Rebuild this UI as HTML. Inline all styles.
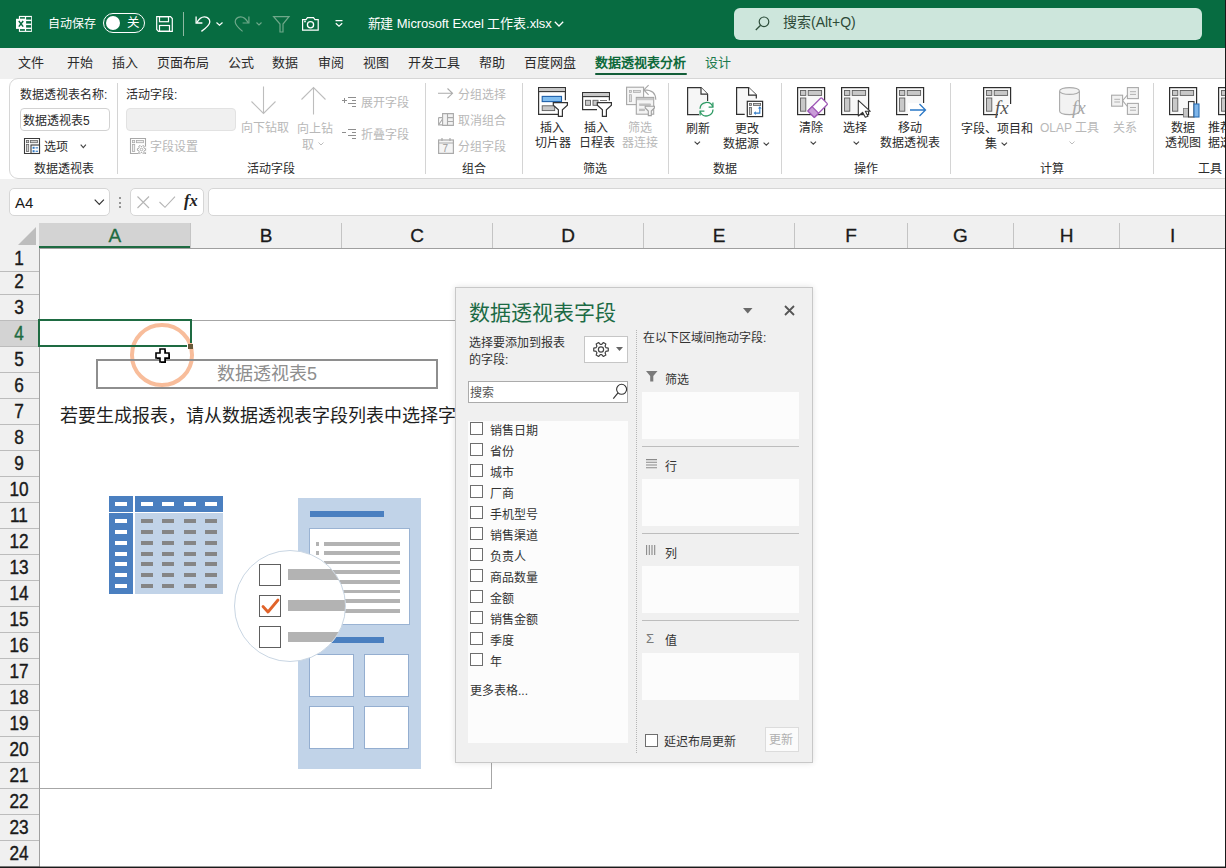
<!DOCTYPE html>
<html lang="zh-CN"><head><meta charset="utf-8"><style>
html,body{margin:0;padding:0;}
body{width:1226px;height:868px;position:relative;overflow:hidden;background:#fff;font-family:"Liberation Sans",sans-serif;}
.t{position:absolute;white-space:nowrap;}
svg{overflow:visible;position:absolute}
</style></head><body>
<div style="position:absolute;left:0px;top:0px;width:1226px;height:48px;background:#076c41;"></div>
<svg style="position:absolute;left:16px;top:16px;" width="16" height="16" viewBox="0 0 16 16"><rect x="2.9" y="-0.1" width="13" height="16" fill="#ffffff"/>
<g fill="#076c41"><rect x="10.1" y="1.1" width="5" height="2.5"/><rect x="10.1" y="5.1" width="5" height="2.5"/><rect x="10.1" y="9.1" width="5" height="2.5"/><rect x="10.1" y="13.1" width="5" height="1.7"/>
<rect x="4" y="1.1" width="4.9" height="1.7"/><rect x="4" y="13.1" width="4.9" height="1.7"/></g>
<rect x="0" y="2.8" width="9.5" height="10.1" fill="#ffffff"/>
<path d="M2.8 5 L7.2 10.6 M7.2 5 L2.8 10.6" stroke="#076c41" stroke-width="1.5"/></svg>
<div class="t" style="left:48px;top:17.8px;font-size:12px;line-height:12px;color:#ffffff;">自动保存</div>
<div style="position:absolute;left:103px;top:13px;width:42px;height:20px;border:1.3px solid #ffffff;border-radius:10px;box-sizing:border-box;"></div>
<div style="position:absolute;left:105.5px;top:15.7px;width:14.6px;height:14.6px;background:#ffffff;border-radius:50%;"></div>
<div class="t" style="left:127px;top:17px;font-size:12.5px;line-height:12.5px;color:#ffffff;">关</div>
<svg style="position:absolute;left:156px;top:16px;" width="17" height="16" viewBox="0 0 17 16"><path d="M0.7 0.7 H14.5 L16.3 2.5 V15.3 H2.5 L0.7 13.5 Z" fill="none" stroke="#ffffff" stroke-width="1.2"/>
<rect x="3.5" y="0.7" width="9" height="5" fill="none" stroke="#ffffff" stroke-width="1.2"/>
<rect x="3.5" y="9.5" width="10" height="5.8" fill="none" stroke="#ffffff" stroke-width="1.2"/></svg>
<div style="position:absolute;left:183px;top:12px;width:1px;height:24px;background:#8fb9a2;"></div>
<svg style="position:absolute;left:195px;top:16px;" width="16" height="16" viewBox="0 0 16 16"><path d="M1.8 6.8 Q5 0.8 9.5 0.9 Q14.8 1.5 14.8 6 Q14.6 9.5 6.4 15.4" fill="none" stroke="#ffffff" stroke-width="1.3"/>
<path d="M1.1 0.6 V7 H7.4" fill="none" stroke="#ffffff" stroke-width="1.3"/></svg>
<svg style="position:absolute;left:216px;top:22px;" width="7" height="4" viewBox="0 0 7 4"><path d="M0.5 0.5 L3.5 3.2 L6.5 0.5" fill="none" stroke="#ffffff" stroke-width="1.2"/></svg>
<svg style="position:absolute;left:235px;top:16px;" width="15" height="16" viewBox="0 0 15 16"><path d="M13.2 6.8 Q10 0.8 5.5 0.9 Q0.2 1.5 0.2 6 Q0.4 9.5 7.6 15.4" fill="none" stroke="#6fa88a" stroke-width="1.2"/>
<path d="M13.9 0.6 V7 H7.6" fill="none" stroke="#6fa88a" stroke-width="1.2"/></svg>
<svg style="position:absolute;left:256px;top:22px;" width="6" height="4" viewBox="0 0 6 4"><path d="M0.5 0.5 L3 3 L5.5 0.5" fill="none" stroke="#6fa88a" stroke-width="1.1"/></svg>
<svg style="position:absolute;left:273px;top:16px;" width="17" height="17" viewBox="0 0 17 17"><path d="M0.6 0.6 H16 L10 8 V16 H7 V8 Z" fill="none" stroke="#6fa88a" stroke-width="1.2"/></svg>
<svg style="position:absolute;left:302px;top:17px;" width="17" height="14" viewBox="0 0 17 14"><path d="M0.6 2.6 H4 L5.5 0.6 H11.5 L13 2.6 H16.2 V13.2 H0.6 Z" fill="none" stroke="#ffffff" stroke-width="1.2"/>
<circle cx="8.5" cy="7.8" r="3.1" fill="none" stroke="#ffffff" stroke-width="1.3"/><rect x="2.2" y="3.7" width="1.6" height="1.6" fill="#ffffff"/></svg>
<svg style="position:absolute;left:335px;top:20px;" width="8" height="8" viewBox="0 0 8 8"><path d="M0.5 0.7 H7.5 M0.8 3.3 L4 6.3 L7.2 3.3" fill="none" stroke="#ffffff" stroke-width="1.2"/></svg>
<div class="t" style="left:367.5px;top:17.0px;font-size:13px;line-height:13px;color:#ffffff;letter-spacing:-0.08px;">新建 Microsoft Excel 工作表.xlsx</div>
<svg style="position:absolute;left:554px;top:21px;" width="10" height="6" viewBox="0 0 10 6"><path d="M0.8 0.8 L5 5 L9.2 0.8" fill="none" stroke="#ffffff" stroke-width="1.3"/></svg>
<div style="position:absolute;left:734px;top:8px;width:468px;height:32px;background:#cde6dc;border-radius:6px;"></div>
<svg style="position:absolute;left:755px;top:16px;" width="15" height="15" viewBox="0 0 15 15"><circle cx="9" cy="5.8" r="4.8" fill="none" stroke="#2f4f3c" stroke-width="1.2"/><path d="M5.6 9.2 L0.8 14" stroke="#2f4f3c" stroke-width="1.3"/></svg>
<div class="t" style="left:783px;top:15px;font-size:14px;line-height:14px;color:#2d4a38;">搜索(Alt+Q)</div>
<div style="position:absolute;left:0px;top:48px;width:1226px;height:31px;background:#f0f0f0;"></div>
<div class="t" style="left:18px;top:55.5px;font-size:13px;line-height:13px;color:#2b2b2b;">文件</div>
<div class="t" style="left:67px;top:55.5px;font-size:13px;line-height:13px;color:#2b2b2b;">开始</div>
<div class="t" style="left:112px;top:55.5px;font-size:13px;line-height:13px;color:#2b2b2b;">插入</div>
<div class="t" style="left:157px;top:55.5px;font-size:13px;line-height:13px;color:#2b2b2b;">页面布局</div>
<div class="t" style="left:228px;top:55.5px;font-size:13px;line-height:13px;color:#2b2b2b;">公式</div>
<div class="t" style="left:272px;top:55.5px;font-size:13px;line-height:13px;color:#2b2b2b;">数据</div>
<div class="t" style="left:318px;top:55.5px;font-size:13px;line-height:13px;color:#2b2b2b;">审阅</div>
<div class="t" style="left:363px;top:55.5px;font-size:13px;line-height:13px;color:#2b2b2b;">视图</div>
<div class="t" style="left:408px;top:55.5px;font-size:13px;line-height:13px;color:#2b2b2b;">开发工具</div>
<div class="t" style="left:479px;top:55.5px;font-size:13px;line-height:13px;color:#2b2b2b;">帮助</div>
<div class="t" style="left:524px;top:55.5px;font-size:13px;line-height:13px;color:#2b2b2b;">百度网盘</div>
<div class="t" style="left:595px;top:55.5px;font-size:13px;line-height:13px;color:#0e6a3b;font-weight:bold;">数据透视表分析</div>
<div class="t" style="left:705px;top:55.5px;font-size:13px;line-height:13px;color:#1c7a4d;">设计</div>
<div style="position:absolute;left:595px;top:72.7px;width:92px;height:2.4px;background:#135e38;border-radius:1px;"></div>
<div style="position:absolute;left:9px;top:78px;width:1240px;height:101px;background:#fff;border:1px solid #d6d6d6;border-radius:9px;box-sizing:border-box;"></div>
<div style="position:absolute;left:117px;top:83px;width:1px;height:91px;background:#d4d4d4;"></div>
<div style="position:absolute;left:425px;top:83px;width:1px;height:91px;background:#d4d4d4;"></div>
<div style="position:absolute;left:522px;top:83px;width:1px;height:91px;background:#d4d4d4;"></div>
<div style="position:absolute;left:668px;top:83px;width:1px;height:91px;background:#d4d4d4;"></div>
<div style="position:absolute;left:781px;top:83px;width:1px;height:91px;background:#d4d4d4;"></div>
<div style="position:absolute;left:950px;top:83px;width:1px;height:91px;background:#d4d4d4;"></div>
<div style="position:absolute;left:1153px;top:83px;width:1px;height:91px;background:#d4d4d4;"></div>
<div class="t" style="left:-36.0px;top:162.5px;width:200px;text-align:center;font-size:12px;line-height:12px;color:#2b2b2b;">数据透视表</div>
<div class="t" style="left:171.0px;top:162.5px;width:200px;text-align:center;font-size:12px;line-height:12px;color:#2b2b2b;">活动字段</div>
<div class="t" style="left:374.0px;top:162.5px;width:200px;text-align:center;font-size:12px;line-height:12px;color:#2b2b2b;">组合</div>
<div class="t" style="left:495.0px;top:162.5px;width:200px;text-align:center;font-size:12px;line-height:12px;color:#2b2b2b;">筛选</div>
<div class="t" style="left:625.0px;top:162.5px;width:200px;text-align:center;font-size:12px;line-height:12px;color:#2b2b2b;">数据</div>
<div class="t" style="left:766.0px;top:162.5px;width:200px;text-align:center;font-size:12px;line-height:12px;color:#2b2b2b;">操作</div>
<div class="t" style="left:952.0px;top:162.5px;width:200px;text-align:center;font-size:12px;line-height:12px;color:#2b2b2b;">计算</div>
<div class="t" style="left:1110.0px;top:162.5px;width:200px;text-align:center;font-size:12px;line-height:12px;color:#2b2b2b;">工具</div>
<div class="t" style="left:20px;top:88.5px;font-size:12px;line-height:12px;color:#2b2b2b;">数据透视表名称:</div>
<div style="position:absolute;left:20px;top:108px;width:90px;height:23px;background:#fff;border:1px solid #d2d2d2;border-radius:4px;box-sizing:border-box;"></div>
<div class="t" style="left:23px;top:114.5px;font-size:12px;line-height:12px;color:#2b2b2b;">数据透视表5</div>
<svg style="position:absolute;left:24px;top:138px;" width="17" height="17" viewBox="0 0 17 17"><path d="M0.5 0.5 H15.5 V15.5 H0.5 Z" fill="#fff" stroke="#3a3a3a" stroke-width="1.1"/>
<rect x="2.5" y="2.5" width="2.2" height="2.2" fill="#d0d0d0" stroke="#666" stroke-width="0.8"/><rect x="6.5" y="2.5" width="7" height="2.2" fill="#d0d0d0" stroke="#666" stroke-width="0.8"/>
<rect x="2.5" y="6.5" width="2.2" height="7" fill="#d0d0d0" stroke="#666" stroke-width="0.8"/>
<rect x="7" y="7" width="8.5" height="8.5" fill="#fff" stroke="#3a3a3a" stroke-width="1.1"/>
<rect x="8.6" y="8.8" width="2" height="2" fill="#2f78c4"/><rect x="11.6" y="9.3" width="2.4" height="1.1" fill="#2f78c4"/><rect x="8.6" y="12.2" width="2" height="2" fill="#2f78c4"/><rect x="11.6" y="12.7" width="2.4" height="1.1" fill="#2f78c4"/></svg>
<div class="t" style="left:44px;top:140.5px;font-size:12px;line-height:12px;color:#2b2b2b;">选项</div>
<svg style="position:absolute;left:80px;top:144px;" width="7" height="5" viewBox="0 0 7 5"><path d="M0.7 0.7 L3.3 3.6 L5.9 0.7" fill="none" stroke="#444" stroke-width="1.1"/></svg>
<div class="t" style="left:126px;top:88.5px;font-size:12px;line-height:12px;color:#2b2b2b;">活动字段:</div>
<div style="position:absolute;left:126px;top:108px;width:110px;height:23px;background:#f0f0f0;border:1px solid #e2e2e2;border-radius:4px;box-sizing:border-box;"></div>
<svg style="position:absolute;left:130px;top:138px;" width="17" height="17" viewBox="0 0 17 17"><path d="M0.5 0.5 H15.5 V15.5 H0.5 Z" fill="#fff" stroke="#a8a8a8" stroke-width="1.1"/>
<rect x="2.5" y="2.5" width="2.2" height="2.2" fill="#eee" stroke="#aaa" stroke-width="0.8"/><rect x="6.5" y="2.5" width="7" height="2.2" fill="#eee" stroke="#aaa" stroke-width="0.8"/>
<rect x="2.5" y="6.5" width="2.2" height="7" fill="#eee" stroke="#aaa" stroke-width="0.8"/>
<circle cx="11.5" cy="11.5" r="5" fill="#fff"/><path d="M14.28 10.38 L15.62 10.70 L15.62 12.30 L14.28 12.62 L13.86 13.35 L14.26 14.67 L12.87 15.47 L11.92 14.47 L11.08 14.47 L10.13 15.47 L8.74 14.67 L9.14 13.35 L8.72 12.62 L7.38 12.30 L7.38 10.70 L8.72 10.38 L9.14 9.65 L8.74 8.33 L10.13 7.53 L11.08 8.53 L11.92 8.53 L12.87 7.53 L14.26 8.33 L13.86 9.65 Z" fill="#fff" stroke="#a8a8a8" stroke-width="1"/><circle cx="11.5" cy="11.5" r="1.3" fill="none" stroke="#a8a8a8" stroke-width="0.9"/></svg>
<div class="t" style="left:150px;top:140.5px;font-size:12px;line-height:12px;color:#b8b8b8;">字段设置</div>
<svg style="position:absolute;left:250px;top:86px;" width="27" height="29" viewBox="0 0 27 29"><path d="M13.5 0.5 V27.5 M1.5 15.5 L13.5 27.5 L25.5 15.5" fill="none" stroke="#bdbdbd" stroke-width="1.1"/></svg>
<div class="t" style="left:241px;top:121.5px;font-size:12px;line-height:12px;color:#b8b8b8;">向下钻取</div>
<svg style="position:absolute;left:300px;top:86px;" width="27" height="29" viewBox="0 0 27 29"><path d="M13.5 1 V28.5 M1.5 13.5 L13.5 1.5 L25.5 13.5" fill="none" stroke="#bdbdbd" stroke-width="1.1"/></svg>
<div class="t" style="left:297px;top:122.5px;font-size:12px;line-height:12px;color:#b8b8b8;">向上钻</div>
<div class="t" style="left:302px;top:138.5px;font-size:12px;line-height:12px;color:#b8b8b8;">取</div>
<svg style="position:absolute;left:318px;top:142px;" width="6" height="4" viewBox="0 0 6 4"><path d="M0.5 0.5 L3 3 L5.5 0.5" fill="none" stroke="#bdbdbd" stroke-width="1"/></svg>
<svg style="position:absolute;left:342px;top:96px;" width="15" height="12" viewBox="0 0 15 12"><path d="M0 4.5 H5 M2.5 2 V7 M6 1.5 H14 M10 4.5 H14 M6 7.5 H14 M10 10.5 H14" fill="none" stroke="#8e8e8e" stroke-width="1"/></svg>
<div class="t" style="left:361px;top:96.5px;font-size:12px;line-height:12px;color:#b8b8b8;">展开字段</div>
<svg style="position:absolute;left:342px;top:128px;" width="15" height="12" viewBox="0 0 15 12"><path d="M0 4.5 H4 M6 1.5 H14 M10 4.5 H14 M6 7.5 H14 M10 10.5 H14" fill="none" stroke="#8e8e8e" stroke-width="1"/></svg>
<div class="t" style="left:361px;top:128.5px;font-size:12px;line-height:12px;color:#b8b8b8;">折叠字段</div>
<svg style="position:absolute;left:438px;top:88px;" width="16" height="11" viewBox="0 0 16 11"><path d="M0 5.3 H14.5 M9.5 0.5 L14.5 5.3 L9.5 10.2" fill="none" stroke="#aaa" stroke-width="1.1"/></svg>
<div class="t" style="left:458px;top:88.5px;font-size:12px;line-height:12px;color:#b8b8b8;">分组选择</div>
<svg style="position:absolute;left:438px;top:113px;" width="16" height="13" viewBox="0 0 16 13"><path d="M0.6 4.6 H4.6 M0.6 4.6 V11.9 H4.6 M1.2 11 L4.3 6.4" fill="none" stroke="#aaa" stroke-width="1.1"/><path d="M4.6 0.6 H15.4 V12.4 H4.6 Z M9.5 0.6 V12.4 M9.5 4.6 H15.4 M9.5 8.5 H15.4" fill="#f2f2f2" stroke="#aaa" stroke-width="1.1"/></svg>
<div class="t" style="left:458px;top:114.5px;font-size:12px;line-height:12px;color:#b8b8b8;">取消组合</div>
<svg style="position:absolute;left:438px;top:138px;" width="16" height="16" viewBox="0 0 16 16"><rect x="0.6" y="2" width="14.8" height="13.4" fill="#f4f4f4" stroke="#aaa" stroke-width="1.2"/><path d="M0.6 5 H15.4 M4 0 V3 M12 0 V3" stroke="#aaa" stroke-width="1.2"/><text x="4.6" y="13.8" font-size="10" fill="#9a9a9a" font-family="Liberation Sans">7</text></svg>
<div class="t" style="left:458px;top:140.5px;font-size:12px;line-height:12px;color:#b8b8b8;">分组字段</div>
<svg style="position:absolute;left:538px;top:87px;" width="31" height="31" viewBox="0 0 31 31"><path d="M20.5 27.4 H0.6 V0.6 H27.4 V13.3" fill="#fff" stroke="#333" stroke-width="1.2"/>
<rect x="1.2" y="1.2" width="25.6" height="3.2" fill="#c8c8c8"/><path d="M0.6 4.6 H27.4" stroke="#333" stroke-width="1.1"/>
<rect x="4.2" y="9.4" width="19.3" height="5.2" fill="#80bdf0" stroke="#1d5fa8" stroke-width="1.1"/>
<rect x="4.2" y="18.8" width="12.5" height="4.8" fill="#c8c8c8" stroke="#5e5e5e" stroke-width="0.9"/>
<path d="M15.3 15.6 H29.4 V18.3 L24.4 22.7 V29.4 H20.4 V22.7 L15.3 18.3 Z" fill="#fff" stroke="#333" stroke-width="1.2"/></svg>
<div class="t" style="left:540px;top:121.5px;font-size:12px;line-height:12px;color:#2b2b2b;">插入</div>
<div class="t" style="left:535px;top:136.5px;font-size:12px;line-height:12px;color:#2b2b2b;">切片器</div>
<svg style="position:absolute;left:582px;top:92px;" width="31" height="26" viewBox="0 0 31 26"><path d="M15 17.6 H0.6 V0.6 H27.4 V8.5" fill="#fff" stroke="#333" stroke-width="1.2"/>
<rect x="1.2" y="1.2" width="25.6" height="3.2" fill="#c8c8c8"/><path d="M0.6 4.6 H27.4" stroke="#333" stroke-width="1.1"/>
<rect x="3.5" y="8.3" width="5" height="5" fill="#c8c8c8" stroke="#5e5e5e" stroke-width="0.9"/><rect x="11" y="8.3" width="5" height="5" fill="#c8c8c8" stroke="#5e5e5e" stroke-width="0.9"/><path d="M18 8.5 H25" stroke="#666" stroke-width="0.9"/>
<path d="M15.3 10.6 H29.4 V13.3 L24.4 17.7 V24.4 H20.4 V17.7 L15.3 13.3 Z" fill="#fff" stroke="#333" stroke-width="1.2"/></svg>
<div class="t" style="left:584px;top:121.5px;font-size:12px;line-height:12px;color:#2b2b2b;">插入</div>
<div class="t" style="left:579px;top:136.5px;font-size:12px;line-height:12px;color:#2b2b2b;">日程表</div>
<svg style="position:absolute;left:626px;top:85px;" width="31" height="32" viewBox="0 0 31 32"><rect x="0.6" y="2.2" width="17" height="17.4" fill="#f6f6f6" stroke="#a6a6a6" stroke-width="1.1"/>
<rect x="3.4" y="5.6" width="2.2" height="2" fill="#ddd" stroke="#aaa" stroke-width="0.7"/><rect x="7.5" y="5.6" width="7" height="2" fill="#ddd" stroke="#aaa" stroke-width="0.7"/><rect x="3.4" y="9.7" width="2.2" height="7" fill="#ddd" stroke="#aaa" stroke-width="0.7"/>
<path d="M22.6 0.1 L17.8 4.9 L22.6 9.9 M18.2 4.9 Q29.8 4.9 29.8 14.8" fill="none" stroke="#a6a6a6" stroke-width="1.1"/>
<rect x="10.3" y="12.4" width="17.4" height="16.8" fill="#f4f4f4" stroke="#a6a6a6" stroke-width="1.1"/>
<rect x="10.9" y="13" width="16.2" height="2.2" fill="#c8c8c8"/>
<rect x="13.7" y="18.9" width="11" height="1.8" fill="#c4c4c4" stroke="#b0b0b0" stroke-width="0.5"/><rect x="13.7" y="24" width="5" height="1.8" fill="#c4c4c4" stroke="#b0b0b0" stroke-width="0.5"/>
<path d="M19.2 21.3 H28.4 V23 L25.3 26 V30.6 H22.3 V26 L19.2 23 Z" fill="#f4f4f4" stroke="#a0a0a0" stroke-width="1.1"/></svg>
<div class="t" style="left:628px;top:121.5px;font-size:12px;line-height:12px;color:#b8b8b8;">筛选</div>
<div class="t" style="left:622px;top:136.5px;font-size:12px;line-height:12px;color:#b8b8b8;">器连接</div>
<svg style="position:absolute;left:687px;top:87px;" width="28" height="31" viewBox="0 0 28 31"><path d="M12 27.6 H0.6 V0.6 H14 L20.6 7.2 V14" fill="#f6f6f6" stroke="#333" stroke-width="1.2"/><path d="M14 0.6 V7.2 H20.6" fill="#fff" stroke="#333" stroke-width="1.2"/>
<path d="M13 21.8 A 6.6 6.6 0 0 1 25.8 19.8 M26 22.6 A 6.6 6.6 0 0 1 13.2 24.6" fill="none" stroke="#2e9a64" stroke-width="1.3"/>
<path d="M25.9 15.6 V20.2 H21.6" fill="none" stroke="#2e9a64" stroke-width="1.3"/><path d="M13.1 28.6 V24.2 H17.4" fill="none" stroke="#2e9a64" stroke-width="1.3"/></svg>
<div class="t" style="left:686px;top:122.5px;font-size:12px;line-height:12px;color:#2b2b2b;">刷新</div>
<svg style="position:absolute;left:694px;top:141px;" width="7" height="4" viewBox="0 0 7 4"><path d="M0.6 0.6 L3.3 3.2 L6 0.6" fill="none" stroke="#444" stroke-width="1.1"/></svg>
<svg style="position:absolute;left:736px;top:87px;" width="28" height="31" viewBox="0 0 28 31"><path d="M8.7 27.4 H0.6 V0.6 H12.6 L20.3 8 V11.6" fill="#f7f7f7" stroke="#2e2e2e" stroke-width="1.2"/><path d="M12.6 0.6 V8.1 H20.3" fill="#fff" stroke="#2e2e2e" stroke-width="1.2"/>
<rect x="11.3" y="14.3" width="15.3" height="15.3" fill="#fff" stroke="#2e2e2e" stroke-width="1.2"/>
<rect x="13.4" y="16.4" width="2" height="2" fill="#c8c8c8" stroke="#5e5e5e" stroke-width="0.8"/><rect x="17.4" y="16.4" width="7.2" height="2" fill="#c8c8c8" stroke="#5e5e5e" stroke-width="0.8"/><rect x="13.4" y="20.4" width="2" height="7" fill="#c8c8c8" stroke="#5e5e5e" stroke-width="0.8"/>
<path d="M19.4 26.1 H23.8 V21" fill="none" stroke="#2b78c6" stroke-width="1.1"/><path d="M17.6 26.1 L19.8 24.3 V27.9 Z M23.8 19.3 L22 21.5 H25.6 Z" fill="#2b78c6"/></svg>
<div class="t" style="left:735px;top:122.5px;font-size:12px;line-height:12px;color:#2b2b2b;">更改</div>
<div class="t" style="left:723px;top:137.5px;font-size:12px;line-height:12px;color:#2b2b2b;">数据源</div>
<svg style="position:absolute;left:763px;top:142px;" width="7" height="4" viewBox="0 0 7 4"><path d="M0.6 0.6 L3.3 3.2 L6 0.6" fill="none" stroke="#444" stroke-width="1.1"/></svg>
<svg style="position:absolute;left:797px;top:87px;" width="28" height="28" viewBox="0 0 28 28"><rect x="0.6" y="0.6" width="27" height="27" fill="#f8f8f8" stroke="#2e2e2e" stroke-width="1.2"/>
<rect x="3.5" y="3.5" width="5.3" height="4.9" fill="#c8c8c8" stroke="#5e5e5e" stroke-width="0.9"/><rect x="11.2" y="3.5" width="13.4" height="4.9" fill="#c8c8c8" stroke="#5e5e5e" stroke-width="0.9"/>
<rect x="3.5" y="11" width="5.3" height="13.2" fill="#c8c8c8" stroke="#5e5e5e" stroke-width="0.9"/></svg>
<svg style="position:absolute;left:807px;top:98px;" width="21" height="20" viewBox="0 0 21 20"><g transform="translate(10.8 9.5) rotate(-45)"><rect x="-9.5" y="-4.6" width="19" height="9.2" rx="1" fill="#fff" stroke="#9d55b5" stroke-width="1.2"/><path d="M-9.5 -4.6 H-3.5 V4.6 H-9.5 Z" fill="#c99bd8" stroke="#9d55b5" stroke-width="1.2"/></g></svg>
<div class="t" style="left:799px;top:121.5px;font-size:12px;line-height:12px;color:#2b2b2b;">清除</div>
<svg style="position:absolute;left:810px;top:141px;" width="7" height="4" viewBox="0 0 7 4"><path d="M0.6 0.6 L3.3 3.2 L6 0.6" fill="none" stroke="#444" stroke-width="1.1"/></svg>
<svg style="position:absolute;left:841px;top:87px;" width="28" height="28" viewBox="0 0 28 28"><rect x="0.6" y="0.6" width="27" height="27" fill="#f8f8f8" stroke="#2e2e2e" stroke-width="1.2"/>
<rect x="3.5" y="3.5" width="5.3" height="4.9" fill="#c8c8c8" stroke="#5e5e5e" stroke-width="0.9"/><rect x="11.2" y="3.5" width="13.4" height="4.9" fill="#c8c8c8" stroke="#5e5e5e" stroke-width="0.9"/>
<rect x="3.5" y="11" width="5.3" height="13.2" fill="#c8c8c8" stroke="#5e5e5e" stroke-width="0.9"/></svg>
<svg style="position:absolute;left:857px;top:99px;" width="15" height="19" viewBox="0 0 15 19"><path d="M1.3 1.3 L13.3 12.3 H8.3 L11 17.3 L8.3 18.3 L5.6 13.3 L1.3 17 Z" fill="#fff" stroke="#333" stroke-width="1.1" stroke-linejoin="round"/></svg>
<div class="t" style="left:843px;top:121.5px;font-size:12px;line-height:12px;color:#2b2b2b;">选择</div>
<svg style="position:absolute;left:853px;top:141px;" width="7" height="4" viewBox="0 0 7 4"><path d="M0.6 0.6 L3.3 3.2 L6 0.6" fill="none" stroke="#444" stroke-width="1.1"/></svg>
<svg style="position:absolute;left:896px;top:87px;" width="28" height="28" viewBox="0 0 28 28"><rect x="0.6" y="0.6" width="27" height="27" fill="#f8f8f8" stroke="#2e2e2e" stroke-width="1.2"/>
<rect x="3.5" y="3.5" width="5.3" height="4.9" fill="#c8c8c8" stroke="#5e5e5e" stroke-width="0.9"/><rect x="11.2" y="3.5" width="13.4" height="4.9" fill="#c8c8c8" stroke="#5e5e5e" stroke-width="0.9"/>
<rect x="3.5" y="11" width="5.3" height="13.2" fill="#c8c8c8" stroke="#5e5e5e" stroke-width="0.9"/></svg>
<div style="position:absolute;left:908px;top:103px;width:19px;height:14px;background:#fff;"></div>
<svg style="position:absolute;left:910px;top:103px;" width="17" height="14" viewBox="0 0 17 14"><path d="M0 7 H15.5 M9.5 1 L15.5 7 L9.5 13" fill="none" stroke="#2b78c6" stroke-width="1.3"/></svg>
<div class="t" style="left:898px;top:121.5px;font-size:12px;line-height:12px;color:#2b2b2b;">移动</div>
<div class="t" style="left:880px;top:136.5px;font-size:12px;line-height:12px;color:#2b2b2b;">数据透视表</div>
<svg style="position:absolute;left:983px;top:87px;" width="28" height="28" viewBox="0 0 28 28"><rect x="0.6" y="0.6" width="27" height="27" fill="#f8f8f8" stroke="#2e2e2e" stroke-width="1.2"/>
<rect x="3.5" y="3.5" width="5.3" height="4.9" fill="#c8c8c8" stroke="#5e5e5e" stroke-width="0.9"/><rect x="11.2" y="3.5" width="13.4" height="4.9" fill="#c8c8c8" stroke="#5e5e5e" stroke-width="0.9"/>
<rect x="3.5" y="11" width="5.3" height="13.2" fill="#c8c8c8" stroke="#5e5e5e" stroke-width="0.9"/></svg>
<div style="position:absolute;left:998px;top:104px;width:14px;height:13px;background:#fff;"></div>
<div class="t" style="left:995px;top:98px;font-size:19px;line-height:19px;color:#555;font-family:Liberation Serif,serif;"><i>f</i><i>x</i></div>
<div class="t" style="left:961px;top:122.5px;font-size:12px;line-height:12px;color:#2b2b2b;">字段、项目和</div>
<div class="t" style="left:985px;top:137.5px;font-size:12px;line-height:12px;color:#2b2b2b;">集</div>
<svg style="position:absolute;left:1001px;top:142px;" width="7" height="4" viewBox="0 0 7 4"><path d="M0.6 0.6 L3.3 3.2 L6 0.6" fill="none" stroke="#444" stroke-width="1.1"/></svg>
<svg style="position:absolute;left:1059px;top:87px;" width="22" height="29" viewBox="0 0 22 29"><path d="M0.6 4 V24 Q0.6 27.6 10.5 27.6 Q20.4 27.6 20.4 24 V4" fill="#f2f2f2" stroke="#aaa" stroke-width="1.1"/>
<ellipse cx="10.5" cy="4" rx="9.9" ry="3.4" fill="#f2f2f2" stroke="#aaa" stroke-width="1.1"/></svg>
<div class="t" style="left:1072px;top:98px;font-size:19px;line-height:19px;color:#a8a8a8;font-family:Liberation Serif,serif;"><i>f</i><i>x</i></div>
<div class="t" style="left:1040px;top:121.5px;font-size:12px;line-height:12px;color:#b8b8b8;">OLAP 工具</div>
<svg style="position:absolute;left:1069px;top:141px;" width="6" height="4" viewBox="0 0 6 4"><path d="M0.5 0.5 L3 3 L5.5 0.5" fill="none" stroke="#bdbdbd" stroke-width="1"/></svg>
<svg style="position:absolute;left:1111px;top:87px;" width="29" height="29" viewBox="0 0 29 29"><rect x="0.6" y="8.2" width="11" height="11" fill="#f2f2f2" stroke="#aaa" stroke-width="1.1"/>
<rect x="16.4" y="0.6" width="11" height="11" fill="#f2f2f2" stroke="#aaa" stroke-width="1.1"/><rect x="16.4" y="16.4" width="11" height="11" fill="#f2f2f2" stroke="#aaa" stroke-width="1.1"/>
<path d="M11.6 13.7 L16.4 8 M11.6 13.7 L16.4 19.5" stroke="#aaa" stroke-width="1.1"/>
<path d="M3.3 12.3 H9 M3.3 15 H9 M19 4.7 H25 M19 7.4 H25 M19 20.5 H25 M19 23.2 H25" stroke="#aaa" stroke-width="0.9"/></svg>
<div class="t" style="left:1113px;top:121.5px;font-size:12px;line-height:12px;color:#b8b8b8;">关系</div>
<svg style="position:absolute;left:1169px;top:87px;" width="28" height="28" viewBox="0 0 28 28"><rect x="0.6" y="0.6" width="27" height="27" fill="#f8f8f8" stroke="#2e2e2e" stroke-width="1.2"/>
<rect x="3.5" y="3.5" width="5.3" height="4.9" fill="#c8c8c8" stroke="#5e5e5e" stroke-width="0.9"/><rect x="11.2" y="3.5" width="13.4" height="4.9" fill="#c8c8c8" stroke="#5e5e5e" stroke-width="0.9"/>
<rect x="3.5" y="11" width="5.3" height="13.2" fill="#c8c8c8" stroke="#5e5e5e" stroke-width="0.9"/></svg>
<svg style="position:absolute;left:1183px;top:101px;" width="17" height="17" viewBox="0 0 17 17"><rect x="0.5" y="7.5" width="5" height="8.5" fill="#c6c6c6" stroke="#777" stroke-width="0.8"/>
<rect x="5.5" y="0.6" width="5.5" height="15.4" fill="#fff" stroke="#333" stroke-width="1.1"/>
<rect x="11" y="3" width="5" height="13" fill="#7fb6ea" stroke="#2b6fb5" stroke-width="1.1"/></svg>
<div class="t" style="left:1171px;top:121.5px;font-size:12px;line-height:12px;color:#2b2b2b;">数据</div>
<div class="t" style="left:1165px;top:136.5px;font-size:12px;line-height:12px;color:#2b2b2b;">透视图</div>
<div style="position:absolute;left:1218px;top:87px;width:30px;height:28px;">
</div>
<svg style="position:absolute;left:1218px;top:87px;" width="28" height="28" viewBox="0 0 28 28"><rect x="0.6" y="0.6" width="27" height="27" fill="#f8f8f8" stroke="#2e2e2e" stroke-width="1.2"/>
<rect x="3.5" y="3.5" width="5.3" height="4.9" fill="#c8c8c8" stroke="#5e5e5e" stroke-width="0.9"/><rect x="11.2" y="3.5" width="13.4" height="4.9" fill="#c8c8c8" stroke="#5e5e5e" stroke-width="0.9"/>
<rect x="3.5" y="11" width="5.3" height="13.2" fill="#c8c8c8" stroke="#5e5e5e" stroke-width="0.9"/></svg>
<div class="t" style="left:1208px;top:121.5px;font-size:12px;line-height:12px;color:#2b2b2b;">推荐</div>
<div class="t" style="left:1208px;top:136.5px;font-size:12px;line-height:12px;color:#2b2b2b;">据透</div>
<div style="position:absolute;left:0px;top:179px;width:1226px;height:44px;background:#f0f0f0;"></div>
<div style="position:absolute;left:9px;top:188px;width:101px;height:28px;background:#fff;border:1px solid #d6d6d6;border-radius:5px;box-sizing:border-box;"></div>
<div class="t" style="left:15px;top:195px;font-size:15px;line-height:15px;color:#1a1a1a;">A4</div>
<svg style="position:absolute;left:94px;top:199px;" width="11" height="7" viewBox="0 0 11 7"><path d="M0.7 0.7 L5.3 5.3 L9.9 0.7" fill="none" stroke="#333" stroke-width="1.2"/></svg>
<div style="position:absolute;left:119px;top:197px;width:2px;height:2px;background:#777;border-radius:1px;"></div>
<div style="position:absolute;left:119px;top:201.5px;width:2px;height:2px;background:#777;border-radius:1px;"></div>
<div style="position:absolute;left:119px;top:206px;width:2px;height:2px;background:#777;border-radius:1px;"></div>
<div style="position:absolute;left:130px;top:188px;width:74px;height:28px;background:#fff;border:1px solid #d6d6d6;border-radius:5px;box-sizing:border-box;"></div>
<svg style="position:absolute;left:137px;top:196px;" width="13" height="13" viewBox="0 0 13 13"><path d="M0.5 0.5 L12 12 M12 0.5 L0.5 12" stroke="#b5b5b5" stroke-width="1.1"/></svg>
<svg style="position:absolute;left:159px;top:196px;" width="17" height="12" viewBox="0 0 17 12"><path d="M0.5 6 L6 11.3 L16 0.7" fill="none" stroke="#b5b5b5" stroke-width="1.1"/></svg>
<div class="t" style="left:184px;top:193px;font-size:16.5px;line-height:16.5px;color:#222;font-family:Liberation Serif,serif;font-weight:bold;letter-spacing:0px;"><i>f</i><i>x</i></div>
<div style="position:absolute;left:208px;top:188px;width:1030px;height:28px;background:#fff;border:1px solid #d6d6d6;border-radius:5px;box-sizing:border-box;"></div>
<div style="position:absolute;left:0px;top:223px;width:1226px;height:25px;background:#f0f0f0;"></div>
<svg style="position:absolute;left:18px;top:227px;" width="19" height="18" viewBox="0 0 19 18"><path d="M18 0 V18 H0 Z" fill="#bdbdbd"/></svg>
<div style="position:absolute;left:39px;top:223px;width:151.5px;height:25px;background:#d3d3d3;"></div>
<div style="position:absolute;left:39px;top:246px;width:151.5px;height:2px;background:#1e6b42;"></div>
<div style="position:absolute;left:190.0px;top:223px;width:1px;height:25px;background:#c4c4c4;"></div>
<div style="position:absolute;left:341.0px;top:223px;width:1px;height:25px;background:#c4c4c4;"></div>
<div style="position:absolute;left:492.0px;top:223px;width:1px;height:25px;background:#c4c4c4;"></div>
<div style="position:absolute;left:643.0px;top:223px;width:1px;height:25px;background:#c4c4c4;"></div>
<div style="position:absolute;left:794.0px;top:223px;width:1px;height:25px;background:#c4c4c4;"></div>
<div style="position:absolute;left:907.0px;top:223px;width:1px;height:25px;background:#c4c4c4;"></div>
<div style="position:absolute;left:1013.0px;top:223px;width:1px;height:25px;background:#c4c4c4;"></div>
<div style="position:absolute;left:1119.0px;top:223px;width:1px;height:25px;background:#c4c4c4;"></div>
<div class="t" style="left:14.75px;top:226px;width:200px;text-align:center;font-size:19px;line-height:19px;color:#1e6b42;-webkit-text-stroke:0.3px currentColor;">A</div>
<div class="t" style="left:166.0px;top:226px;width:200px;text-align:center;font-size:19px;line-height:19px;color:#1a1a1a;-webkit-text-stroke:0.3px currentColor;">B</div>
<div class="t" style="left:317.0px;top:226px;width:200px;text-align:center;font-size:19px;line-height:19px;color:#1a1a1a;-webkit-text-stroke:0.3px currentColor;">C</div>
<div class="t" style="left:468.0px;top:226px;width:200px;text-align:center;font-size:19px;line-height:19px;color:#1a1a1a;-webkit-text-stroke:0.3px currentColor;">D</div>
<div class="t" style="left:619.0px;top:226px;width:200px;text-align:center;font-size:19px;line-height:19px;color:#1a1a1a;-webkit-text-stroke:0.3px currentColor;">E</div>
<div class="t" style="left:751.0px;top:226px;width:200px;text-align:center;font-size:19px;line-height:19px;color:#1a1a1a;-webkit-text-stroke:0.3px currentColor;">F</div>
<div class="t" style="left:860.5px;top:226px;width:200px;text-align:center;font-size:19px;line-height:19px;color:#1a1a1a;-webkit-text-stroke:0.3px currentColor;">G</div>
<div class="t" style="left:966.5px;top:226px;width:200px;text-align:center;font-size:19px;line-height:19px;color:#1a1a1a;-webkit-text-stroke:0.3px currentColor;">H</div>
<div class="t" style="left:1072.75px;top:226px;width:200px;text-align:center;font-size:19px;line-height:19px;color:#1a1a1a;-webkit-text-stroke:0.3px currentColor;">I</div>
<div style="position:absolute;left:0px;top:248px;width:1226px;height:1px;background:#9f9f9f;"></div>
<div style="position:absolute;left:0px;top:248px;width:39px;height:620px;background:#f0f0f0;"></div>
<div style="position:absolute;left:0px;top:320.4px;width:39px;height:26px;background:#d3d3d3;"></div>
<div style="position:absolute;left:0px;top:270.9px;width:39px;height:1px;background:#bcbcbc;"></div>
<div style="position:absolute;left:0px;top:293.9px;width:39px;height:1px;background:#bcbcbc;"></div>
<div style="position:absolute;left:0px;top:319.9px;width:39px;height:1px;background:#bcbcbc;"></div>
<div style="position:absolute;left:0px;top:345.9px;width:39px;height:1px;background:#bcbcbc;"></div>
<div style="position:absolute;left:0px;top:371.9px;width:39px;height:1px;background:#bcbcbc;"></div>
<div style="position:absolute;left:0px;top:397.9px;width:39px;height:1px;background:#bcbcbc;"></div>
<div style="position:absolute;left:0px;top:423.9px;width:39px;height:1px;background:#bcbcbc;"></div>
<div style="position:absolute;left:0px;top:449.9px;width:39px;height:1px;background:#bcbcbc;"></div>
<div style="position:absolute;left:0px;top:475.9px;width:39px;height:1px;background:#bcbcbc;"></div>
<div style="position:absolute;left:0px;top:501.9px;width:39px;height:1px;background:#bcbcbc;"></div>
<div style="position:absolute;left:0px;top:527.9px;width:39px;height:1px;background:#bcbcbc;"></div>
<div style="position:absolute;left:0px;top:553.9px;width:39px;height:1px;background:#bcbcbc;"></div>
<div style="position:absolute;left:0px;top:579.9px;width:39px;height:1px;background:#bcbcbc;"></div>
<div style="position:absolute;left:0px;top:605.9px;width:39px;height:1px;background:#bcbcbc;"></div>
<div style="position:absolute;left:0px;top:631.9px;width:39px;height:1px;background:#bcbcbc;"></div>
<div style="position:absolute;left:0px;top:657.9px;width:39px;height:1px;background:#bcbcbc;"></div>
<div style="position:absolute;left:0px;top:683.9px;width:39px;height:1px;background:#bcbcbc;"></div>
<div style="position:absolute;left:0px;top:709.9px;width:39px;height:1px;background:#bcbcbc;"></div>
<div style="position:absolute;left:0px;top:735.9px;width:39px;height:1px;background:#bcbcbc;"></div>
<div style="position:absolute;left:0px;top:761.9px;width:39px;height:1px;background:#bcbcbc;"></div>
<div style="position:absolute;left:0px;top:787.9px;width:39px;height:1px;background:#bcbcbc;"></div>
<div style="position:absolute;left:0px;top:813.9px;width:39px;height:1px;background:#bcbcbc;"></div>
<div style="position:absolute;left:0px;top:839.9px;width:39px;height:1px;background:#bcbcbc;"></div>
<div style="position:absolute;left:0px;top:865.9px;width:39px;height:1px;background:#bcbcbc;"></div>
<div style="position:absolute;left:39px;top:248px;width:1px;height:620px;background:#9f9f9f;"></div>
<div class="t" style="left:-1.0px;top:248.0px;width:40px;text-align:center;font-size:20px;line-height:20px;color:#1a1a1a;transform:scaleX(0.86);-webkit-text-stroke:0.4px currentColor;">1</div>
<div class="t" style="left:-1.0px;top:271.2px;width:40px;text-align:center;font-size:20px;line-height:20px;color:#1a1a1a;transform:scaleX(0.86);-webkit-text-stroke:0.4px currentColor;">2</div>
<div class="t" style="left:-1.0px;top:297.4px;width:40px;text-align:center;font-size:20px;line-height:20px;color:#1a1a1a;transform:scaleX(0.86);-webkit-text-stroke:0.4px currentColor;">3</div>
<div class="t" style="left:-1.0px;top:323.4px;width:40px;text-align:center;font-size:20px;line-height:20px;color:#1e6b42;transform:scaleX(0.86);-webkit-text-stroke:0.4px currentColor;">4</div>
<div class="t" style="left:-1.0px;top:349.4px;width:40px;text-align:center;font-size:20px;line-height:20px;color:#1a1a1a;transform:scaleX(0.86);-webkit-text-stroke:0.4px currentColor;">5</div>
<div class="t" style="left:-1.0px;top:375.4px;width:40px;text-align:center;font-size:20px;line-height:20px;color:#1a1a1a;transform:scaleX(0.86);-webkit-text-stroke:0.4px currentColor;">6</div>
<div class="t" style="left:-1.0px;top:401.4px;width:40px;text-align:center;font-size:20px;line-height:20px;color:#1a1a1a;transform:scaleX(0.86);-webkit-text-stroke:0.4px currentColor;">7</div>
<div class="t" style="left:-1.0px;top:427.4px;width:40px;text-align:center;font-size:20px;line-height:20px;color:#1a1a1a;transform:scaleX(0.86);-webkit-text-stroke:0.4px currentColor;">8</div>
<div class="t" style="left:-1.0px;top:453.4px;width:40px;text-align:center;font-size:20px;line-height:20px;color:#1a1a1a;transform:scaleX(0.86);-webkit-text-stroke:0.4px currentColor;">9</div>
<div class="t" style="left:-1.0px;top:479.4px;width:40px;text-align:center;font-size:20px;line-height:20px;color:#1a1a1a;transform:scaleX(0.86);-webkit-text-stroke:0.4px currentColor;">10</div>
<div class="t" style="left:-1.0px;top:505.4px;width:40px;text-align:center;font-size:20px;line-height:20px;color:#1a1a1a;transform:scaleX(0.86);-webkit-text-stroke:0.4px currentColor;">11</div>
<div class="t" style="left:-1.0px;top:531.4px;width:40px;text-align:center;font-size:20px;line-height:20px;color:#1a1a1a;transform:scaleX(0.86);-webkit-text-stroke:0.4px currentColor;">12</div>
<div class="t" style="left:-1.0px;top:557.4px;width:40px;text-align:center;font-size:20px;line-height:20px;color:#1a1a1a;transform:scaleX(0.86);-webkit-text-stroke:0.4px currentColor;">13</div>
<div class="t" style="left:-1.0px;top:583.4px;width:40px;text-align:center;font-size:20px;line-height:20px;color:#1a1a1a;transform:scaleX(0.86);-webkit-text-stroke:0.4px currentColor;">14</div>
<div class="t" style="left:-1.0px;top:609.4px;width:40px;text-align:center;font-size:20px;line-height:20px;color:#1a1a1a;transform:scaleX(0.86);-webkit-text-stroke:0.4px currentColor;">15</div>
<div class="t" style="left:-1.0px;top:635.4px;width:40px;text-align:center;font-size:20px;line-height:20px;color:#1a1a1a;transform:scaleX(0.86);-webkit-text-stroke:0.4px currentColor;">16</div>
<div class="t" style="left:-1.0px;top:661.4px;width:40px;text-align:center;font-size:20px;line-height:20px;color:#1a1a1a;transform:scaleX(0.86);-webkit-text-stroke:0.4px currentColor;">17</div>
<div class="t" style="left:-1.0px;top:687.4px;width:40px;text-align:center;font-size:20px;line-height:20px;color:#1a1a1a;transform:scaleX(0.86);-webkit-text-stroke:0.4px currentColor;">18</div>
<div class="t" style="left:-1.0px;top:713.4px;width:40px;text-align:center;font-size:20px;line-height:20px;color:#1a1a1a;transform:scaleX(0.86);-webkit-text-stroke:0.4px currentColor;">19</div>
<div class="t" style="left:-1.0px;top:739.4px;width:40px;text-align:center;font-size:20px;line-height:20px;color:#1a1a1a;transform:scaleX(0.86);-webkit-text-stroke:0.4px currentColor;">20</div>
<div class="t" style="left:-1.0px;top:765.4px;width:40px;text-align:center;font-size:20px;line-height:20px;color:#1a1a1a;transform:scaleX(0.86);-webkit-text-stroke:0.4px currentColor;">21</div>
<div class="t" style="left:-1.0px;top:791.4px;width:40px;text-align:center;font-size:20px;line-height:20px;color:#1a1a1a;transform:scaleX(0.86);-webkit-text-stroke:0.4px currentColor;">22</div>
<div class="t" style="left:-1.0px;top:817.4px;width:40px;text-align:center;font-size:20px;line-height:20px;color:#1a1a1a;transform:scaleX(0.86);-webkit-text-stroke:0.4px currentColor;">23</div>
<div class="t" style="left:-1.0px;top:843.4px;width:40px;text-align:center;font-size:20px;line-height:20px;color:#1a1a1a;transform:scaleX(0.86);-webkit-text-stroke:0.4px currentColor;">24</div>
<div style="position:absolute;left:39px;top:320px;width:453px;height:469px;border:1px solid #a6a6a6;border-left:none;box-sizing:border-box;"></div>
<div style="position:absolute;left:130.2px;top:323px;width:63.6px;height:63.6px;border:4.6px solid rgba(247,178,138,0.85);border-radius:50%;box-sizing:border-box;"></div>
<div style="position:absolute;left:38px;top:319px;width:154px;height:2px;background:#1e6b42;"></div>
<div style="position:absolute;left:38px;top:319px;width:2px;height:28px;background:#1e6b42;"></div>
<div style="position:absolute;left:38px;top:345px;width:149px;height:2px;background:#1e6b42;"></div>
<div style="position:absolute;left:190px;top:319px;width:2px;height:24px;background:#1e6b42;"></div>
<div style="position:absolute;left:188px;top:344px;width:5px;height:5px;background:#6b5a3a;"></div>
<div style="position:absolute;left:95.5px;top:359px;width:342px;height:30px;border:2px solid #8e8e8e;box-sizing:border-box;"></div>
<div class="t" style="left:117.0px;top:365.2px;width:300px;text-align:center;font-size:18px;line-height:18px;color:#8e8e8e;">数据透视表5</div>
<div class="t" style="left:59.5px;top:407.2px;font-size:18px;line-height:18px;color:#1f1f1f;">若要生成报表，请从数据透视表字段列表中选择字段</div>
<div style="position:absolute;left:109px;top:496px;width:24px;height:15.5px;background:#4a7fc0;"></div>
<div style="position:absolute;left:135px;top:496px;width:88px;height:15.5px;background:#4a7fc0;"></div>
<div style="position:absolute;left:109px;top:513px;width:24px;height:81px;background:#4a7fc0;"></div>
<div style="position:absolute;left:135px;top:513px;width:88px;height:81px;background:#c1d3e8;"></div>
<div style="position:absolute;left:115px;top:502px;width:12px;height:4px;background:#fff;"></div>
<div style="position:absolute;left:141px;top:502px;width:12px;height:4px;background:#fff;"></div>
<div style="position:absolute;left:162px;top:502px;width:12px;height:4px;background:#fff;"></div>
<div style="position:absolute;left:184px;top:502px;width:12px;height:4px;background:#fff;"></div>
<div style="position:absolute;left:205px;top:502px;width:12px;height:4px;background:#fff;"></div>
<div style="position:absolute;left:115px;top:519px;width:12px;height:4px;background:#fff;"></div>
<div style="position:absolute;left:141px;top:519px;width:12px;height:4px;background:#858585;"></div>
<div style="position:absolute;left:162px;top:519px;width:12px;height:4px;background:#858585;"></div>
<div style="position:absolute;left:184px;top:519px;width:12px;height:4px;background:#858585;"></div>
<div style="position:absolute;left:205px;top:519px;width:12px;height:4px;background:#858585;"></div>
<div style="position:absolute;left:115px;top:530px;width:12px;height:4px;background:#fff;"></div>
<div style="position:absolute;left:141px;top:530px;width:12px;height:4px;background:#858585;"></div>
<div style="position:absolute;left:162px;top:530px;width:12px;height:4px;background:#858585;"></div>
<div style="position:absolute;left:184px;top:530px;width:12px;height:4px;background:#858585;"></div>
<div style="position:absolute;left:205px;top:530px;width:12px;height:4px;background:#858585;"></div>
<div style="position:absolute;left:115px;top:540.5px;width:12px;height:4px;background:#fff;"></div>
<div style="position:absolute;left:141px;top:540.5px;width:12px;height:4px;background:#858585;"></div>
<div style="position:absolute;left:162px;top:540.5px;width:12px;height:4px;background:#858585;"></div>
<div style="position:absolute;left:184px;top:540.5px;width:12px;height:4px;background:#858585;"></div>
<div style="position:absolute;left:205px;top:540.5px;width:12px;height:4px;background:#858585;"></div>
<div style="position:absolute;left:115px;top:551.5px;width:12px;height:4px;background:#fff;"></div>
<div style="position:absolute;left:141px;top:551.5px;width:12px;height:4px;background:#858585;"></div>
<div style="position:absolute;left:162px;top:551.5px;width:12px;height:4px;background:#858585;"></div>
<div style="position:absolute;left:184px;top:551.5px;width:12px;height:4px;background:#858585;"></div>
<div style="position:absolute;left:205px;top:551.5px;width:12px;height:4px;background:#858585;"></div>
<div style="position:absolute;left:115px;top:562px;width:12px;height:4px;background:#fff;"></div>
<div style="position:absolute;left:141px;top:562px;width:12px;height:4px;background:#858585;"></div>
<div style="position:absolute;left:162px;top:562px;width:12px;height:4px;background:#858585;"></div>
<div style="position:absolute;left:184px;top:562px;width:12px;height:4px;background:#858585;"></div>
<div style="position:absolute;left:205px;top:562px;width:12px;height:4px;background:#858585;"></div>
<div style="position:absolute;left:115px;top:573px;width:12px;height:4px;background:#fff;"></div>
<div style="position:absolute;left:141px;top:573px;width:12px;height:4px;background:#858585;"></div>
<div style="position:absolute;left:162px;top:573px;width:12px;height:4px;background:#858585;"></div>
<div style="position:absolute;left:184px;top:573px;width:12px;height:4px;background:#858585;"></div>
<div style="position:absolute;left:205px;top:573px;width:12px;height:4px;background:#858585;"></div>
<div style="position:absolute;left:115px;top:584px;width:12px;height:4px;background:#fff;"></div>
<div style="position:absolute;left:141px;top:584px;width:12px;height:4px;background:#858585;"></div>
<div style="position:absolute;left:162px;top:584px;width:12px;height:4px;background:#858585;"></div>
<div style="position:absolute;left:184px;top:584px;width:12px;height:4px;background:#858585;"></div>
<div style="position:absolute;left:205px;top:584px;width:12px;height:4px;background:#858585;"></div>
<div style="position:absolute;left:298px;top:498px;width:123px;height:271px;background:#c1d3e8;"></div>
<div style="position:absolute;left:310px;top:510.7px;width:74px;height:6.3px;background:#4a7fc0;"></div>
<div style="position:absolute;left:308.5px;top:528.3px;width:101px;height:97px;background:#fff;border:1px solid #9ab3d3;box-sizing:border-box;"></div>
<div style="position:absolute;left:324px;top:542px;width:76px;height:3.6px;background:#b3b3b3;"></div>
<div style="position:absolute;left:316px;top:542px;width:2.6px;height:3.6px;background:#b3b3b3;"></div>
<div style="position:absolute;left:324px;top:551.3px;width:76px;height:3.6px;background:#b3b3b3;"></div>
<div style="position:absolute;left:316px;top:551.3px;width:2.6px;height:3.6px;background:#b3b3b3;"></div>
<div style="position:absolute;left:324px;top:560.7px;width:76px;height:3.6px;background:#b3b3b3;"></div>
<div style="position:absolute;left:324px;top:570.3px;width:76px;height:3.6px;background:#b3b3b3;"></div>
<div style="position:absolute;left:324px;top:580px;width:76px;height:3.6px;background:#b3b3b3;"></div>
<div style="position:absolute;left:324px;top:589.7px;width:76px;height:3.6px;background:#b3b3b3;"></div>
<div style="position:absolute;left:324px;top:599.3px;width:76px;height:3.6px;background:#b3b3b3;"></div>
<div style="position:absolute;left:324px;top:609px;width:76px;height:3.6px;background:#b3b3b3;"></div>
<div style="position:absolute;left:310px;top:637px;width:74px;height:6px;background:#4a7fc0;"></div>
<div style="position:absolute;left:308.5px;top:653.7px;width:45px;height:43px;background:#fff;border:1px solid #94aed0;box-sizing:border-box;"></div>
<div style="position:absolute;left:308.5px;top:705.8px;width:45px;height:43px;background:#fff;border:1px solid #94aed0;box-sizing:border-box;"></div>
<div style="position:absolute;left:364.2px;top:653.7px;width:45px;height:43px;background:#fff;border:1px solid #94aed0;box-sizing:border-box;"></div>
<div style="position:absolute;left:364.2px;top:705.8px;width:45px;height:43px;background:#fff;border:1px solid #94aed0;box-sizing:border-box;"></div>
<div style="position:absolute;left:234px;top:550px;width:112px;height:112px;border-radius:50%;background:#fff;border:1.5px solid #c9d6e3;box-sizing:border-box;overflow:hidden;">
<div style="position:absolute;left:23.69999999999999px;top:12.700000000000045px;width:22.6px;height:22.6px;border:1.8px solid #5e5e5e;box-sizing:border-box;background:#fff;"></div>
<div style="position:absolute;left:52.69999999999999px;top:18.299999999999955px;width:80px;height:10.5px;background:#b3b3b3;"></div>
<div style="position:absolute;left:23.69999999999999px;top:43.799999999999955px;width:22.6px;height:22.6px;border:1.8px solid #5e5e5e;box-sizing:border-box;background:#fff;"></div>
<div style="position:absolute;left:52.69999999999999px;top:49.39999999999998px;width:80px;height:10.5px;background:#b3b3b3;"></div>
<div style="position:absolute;left:23.69999999999999px;top:74.70000000000005px;width:22.6px;height:22.6px;border:1.8px solid #5e5e5e;box-sizing:border-box;background:#fff;"></div>
<div style="position:absolute;left:52.69999999999999px;top:80.5px;width:80px;height:10.5px;background:#b3b3b3;"></div>
</div>
<svg style="position:absolute;left:261px;top:598px;" width="19" height="17" viewBox="0 0 19 17"><path d="M2 8.5 L7 14 L17 2" fill="none" stroke="#e0632a" stroke-width="2.8" stroke-linecap="round" stroke-linejoin="round"/></svg>
<svg style="position:absolute;left:155px;top:348px;" width="16" height="16" viewBox="0 0 16 16"><path d="M6 2 H11 V6 H15 V11 H11 V15 H6 V11 H2 V6 H6 Z" fill="#000"/><path d="M5 1 H10 V5 H14 V10 H10 V14 H5 V10 H1 V5 H5 Z" fill="#fff" stroke="#000" stroke-width="1.6" stroke-linejoin="miter"/></svg>
<div style="position:absolute;left:455px;top:287px;width:358px;height:476px;background:#f0f0f0;border:1px solid #c8c8c8;box-sizing:border-box;box-shadow:0 0 6px rgba(0,0,0,0.12);"></div>
<div class="t" style="left:469px;top:301.5px;font-size:21px;line-height:21px;color:#1c6b45;">数据透视表字段</div>
<svg style="position:absolute;left:743px;top:308px;" width="10" height="6" viewBox="0 0 10 6"><path d="M0 0 H9.5 L4.75 5.5 Z" fill="#6a6a6a"/></svg>
<svg style="position:absolute;left:784px;top:305px;" width="11" height="11" viewBox="0 0 11 11"><path d="M1 1 L10 10 M10 1 L1 10" stroke="#555" stroke-width="1.8"/></svg>
<div class="t" style="left:469px;top:337.1px;font-size:12px;line-height:12px;color:#333;">选择要添加到报表</div>
<div class="t" style="left:469px;top:354.1px;font-size:12px;line-height:12px;color:#333;">的字段:</div>
<div style="position:absolute;left:584px;top:336px;width:44px;height:27px;background:#fff;border:1px solid #c6c6c6;box-sizing:border-box;"></div>
<svg style="position:absolute;left:593px;top:341.5px;" width="16" height="16" viewBox="0 0 16 16"><path d="M12.82 5.55 L15.26 6.09 L15.26 8.91 L12.82 9.45 L12.10 10.70 L12.85 13.08 L10.41 14.50 L8.72 12.65 L7.28 12.65 L5.59 14.50 L3.15 13.08 L3.90 10.70 L3.18 9.45 L0.74 8.91 L0.74 6.09 L3.18 5.55 L3.90 4.30 L3.15 1.92 L5.59 0.50 L7.28 2.35 L8.72 2.35 L10.41 0.50 L12.85 1.92 L12.10 4.30 Z" fill="none" stroke="#444" stroke-width="1.2" stroke-linejoin="round"/><circle cx="8" cy="7.5" r="2.6" fill="none" stroke="#444" stroke-width="1.2"/></svg>
<svg style="position:absolute;left:616px;top:347px;" width="8" height="5" viewBox="0 0 8 5"><path d="M0 0 H7 L3.5 4 Z" fill="#666"/></svg>
<div style="position:absolute;left:468px;top:381px;width:160px;height:22px;background:#fff;border:1px solid #ababab;box-sizing:border-box;"></div>
<div class="t" style="left:470px;top:386.5px;font-size:12px;line-height:12px;color:#555;">搜索</div>
<svg style="position:absolute;left:611px;top:383px;" width="17" height="17" viewBox="0 0 17 17"><circle cx="10.6" cy="6.3" r="5" fill="none" stroke="#333" stroke-width="1.1"/><path d="M7 9.9 L2.3 15.6" stroke="#333" stroke-width="1.2"/></svg>
<div style="position:absolute;left:468px;top:421px;width:160px;height:322px;background:#fcfcfc;"></div>
<div style="position:absolute;left:470px;top:422.3px;width:13px;height:13px;background:#fff;border:1px solid #6e6e6e;box-sizing:border-box;"></div>
<div class="t" style="left:489.5px;top:424.5px;font-size:12px;line-height:12px;color:#333;">销售日期</div>
<div style="position:absolute;left:470px;top:443.3px;width:13px;height:13px;background:#fff;border:1px solid #6e6e6e;box-sizing:border-box;"></div>
<div class="t" style="left:489.5px;top:445.5px;font-size:12px;line-height:12px;color:#333;">省份</div>
<div style="position:absolute;left:470px;top:464.3px;width:13px;height:13px;background:#fff;border:1px solid #6e6e6e;box-sizing:border-box;"></div>
<div class="t" style="left:489.5px;top:466.5px;font-size:12px;line-height:12px;color:#333;">城市</div>
<div style="position:absolute;left:470px;top:485.3px;width:13px;height:13px;background:#fff;border:1px solid #6e6e6e;box-sizing:border-box;"></div>
<div class="t" style="left:489.5px;top:487.5px;font-size:12px;line-height:12px;color:#333;">厂商</div>
<div style="position:absolute;left:470px;top:506.3px;width:13px;height:13px;background:#fff;border:1px solid #6e6e6e;box-sizing:border-box;"></div>
<div class="t" style="left:489.5px;top:508.5px;font-size:12px;line-height:12px;color:#333;">手机型号</div>
<div style="position:absolute;left:470px;top:527.3px;width:13px;height:13px;background:#fff;border:1px solid #6e6e6e;box-sizing:border-box;"></div>
<div class="t" style="left:489.5px;top:529.5px;font-size:12px;line-height:12px;color:#333;">销售渠道</div>
<div style="position:absolute;left:470px;top:548.3px;width:13px;height:13px;background:#fff;border:1px solid #6e6e6e;box-sizing:border-box;"></div>
<div class="t" style="left:489.5px;top:550.5px;font-size:12px;line-height:12px;color:#333;">负责人</div>
<div style="position:absolute;left:470px;top:569.3px;width:13px;height:13px;background:#fff;border:1px solid #6e6e6e;box-sizing:border-box;"></div>
<div class="t" style="left:489.5px;top:571.5px;font-size:12px;line-height:12px;color:#333;">商品数量</div>
<div style="position:absolute;left:470px;top:590.3px;width:13px;height:13px;background:#fff;border:1px solid #6e6e6e;box-sizing:border-box;"></div>
<div class="t" style="left:489.5px;top:592.5px;font-size:12px;line-height:12px;color:#333;">金额</div>
<div style="position:absolute;left:470px;top:611.3px;width:13px;height:13px;background:#fff;border:1px solid #6e6e6e;box-sizing:border-box;"></div>
<div class="t" style="left:489.5px;top:613.5px;font-size:12px;line-height:12px;color:#333;">销售金额</div>
<div style="position:absolute;left:470px;top:632.3px;width:13px;height:13px;background:#fff;border:1px solid #6e6e6e;box-sizing:border-box;"></div>
<div class="t" style="left:489.5px;top:634.5px;font-size:12px;line-height:12px;color:#333;">季度</div>
<div style="position:absolute;left:470px;top:653.3px;width:13px;height:13px;background:#fff;border:1px solid #6e6e6e;box-sizing:border-box;"></div>
<div class="t" style="left:489.5px;top:655.5px;font-size:12px;line-height:12px;color:#333;">年</div>
<div class="t" style="left:470px;top:685.0px;font-size:12px;line-height:12px;color:#333;">更多表格...</div>
<div style="position:absolute;left:636px;top:330px;width:0;height:423px;border-left:1px dotted #b5b5b5;"></div>
<div class="t" style="left:643px;top:331.5px;font-size:12px;line-height:12px;color:#333;">在以下区域间拖动字段:</div>
<svg style="position:absolute;left:646px;top:371px;" width="12" height="11" viewBox="0 0 12 11"><path d="M0 0 H11.5 L7.3 5 V10.5 H4.2 V5 Z" fill="#7a7a7a"/></svg>
<div class="t" style="left:665px;top:373.5px;font-size:12px;line-height:12px;color:#333;">筛选</div>
<div style="position:absolute;left:642px;top:392px;width:157px;height:47px;background:#fcfcfc;"></div>
<div style="position:absolute;left:642px;top:445.5px;width:157px;height:1px;background:#bdbdbd;"></div>
<svg style="position:absolute;left:646px;top:459px;" width="11" height="10" viewBox="0 0 11 10"><path d="M0 0.6 H11 M0 3.3 H11 M0 6 H11 M0 8.7 H11" stroke="#8a8a8a" stroke-width="1.1"/></svg>
<div class="t" style="left:665px;top:460.5px;font-size:12px;line-height:12px;color:#333;">行</div>
<div style="position:absolute;left:642px;top:479px;width:157px;height:47px;background:#fcfcfc;"></div>
<div style="position:absolute;left:642px;top:532.5px;width:157px;height:1px;background:#bdbdbd;"></div>
<svg style="position:absolute;left:646px;top:545px;" width="11" height="10" viewBox="0 0 11 10"><path d="M0.6 0 V10 M3.3 0 V10 M6 0 V10 M8.7 0 V10" stroke="#8a8a8a" stroke-width="1.1"/></svg>
<div class="t" style="left:665px;top:547.5px;font-size:12px;line-height:12px;color:#333;">列</div>
<div style="position:absolute;left:642px;top:566px;width:157px;height:47px;background:#fcfcfc;"></div>
<div style="position:absolute;left:642px;top:619.5px;width:157px;height:1px;background:#bdbdbd;"></div>
<div class="t" style="left:646px;top:631.5px;font-size:13px;line-height:13px;color:#7a7a7a;">Σ</div>
<div class="t" style="left:665px;top:634.5px;font-size:12px;line-height:12px;color:#333;">值</div>
<div style="position:absolute;left:642px;top:653px;width:157px;height:47px;background:#fcfcfc;"></div>
<div style="position:absolute;left:645px;top:734px;width:13px;height:13px;background:#fff;border:1px solid #6e6e6e;box-sizing:border-box;"></div>
<div class="t" style="left:664px;top:735.5px;font-size:12px;line-height:12px;color:#333;">延迟布局更新</div>
<div style="position:absolute;left:765px;top:727px;width:34px;height:25px;background:#fbfbfb;border:1px solid #dcdcdc;box-sizing:border-box;"></div>
<div class="t" style="left:769px;top:733.5px;font-size:12px;line-height:12px;color:#b0b0b0;">更新</div>
<div style="position:absolute;left:1225px;top:0px;width:1px;height:868px;background:#1a1a1a;"></div>
<div style="position:absolute;left:0px;top:867px;width:1226px;height:1px;background:#1a1a1a;"></div>
<div style="position:absolute;left:0px;top:866px;width:1226px;height:1px;background:rgba(26,26,26,0.45);"></div>
</body></html>
